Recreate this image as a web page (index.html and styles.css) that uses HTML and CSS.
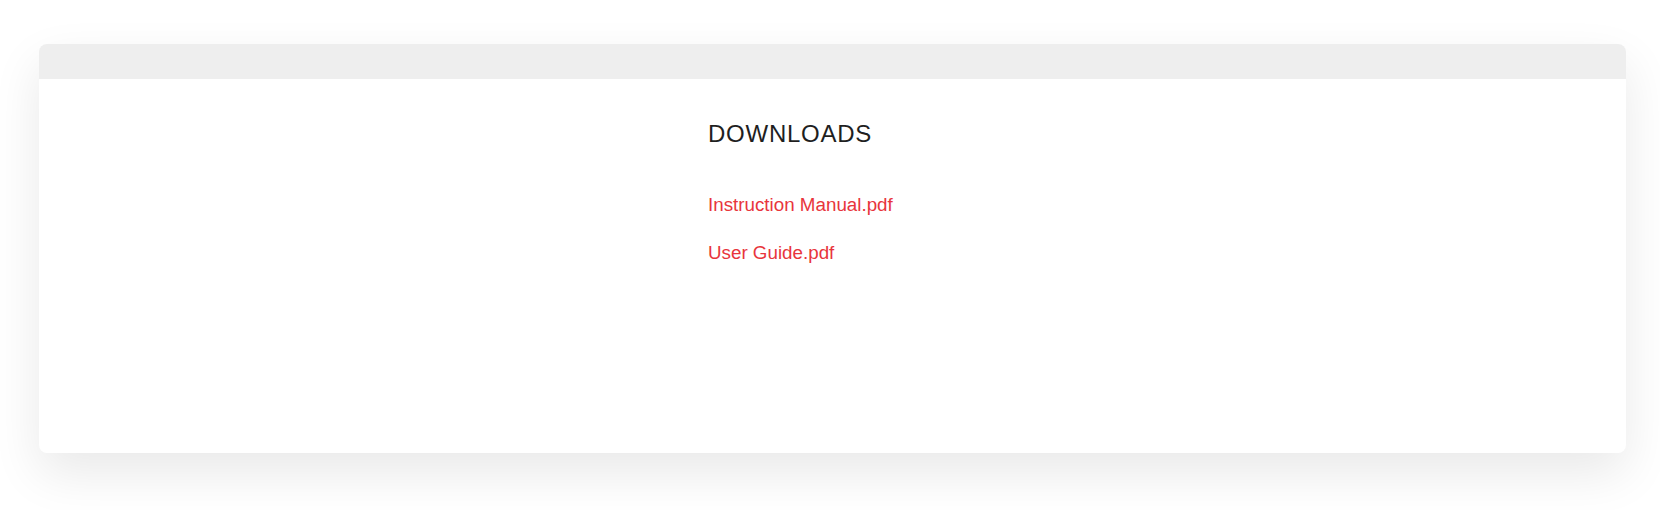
FILE: index.html
```html
<!DOCTYPE html>
<html>
<head>
<meta charset="utf-8">
<link rel="stylesheet" href="styles.css">
</head>
<body>
<div class="page">
  <div class="card">
    <div class="card-header"></div>
    <div class="card-body">
      <h2 class="title">DOWNLOADS</h2>
      <ul class="links">
        <li><a href="#">Instruction Manual.pdf</a></li>
        <li><a href="#">User Guide.pdf</a></li>
      </ul>
    </div>
  </div>
</div>
</body>
</html>
```
FILE: styles.css
```css
html, body {
  margin: 0;
  padding: 0;
  background: #ffffff;
  font-family: "Liberation Sans", Arial, sans-serif;
}
.page {
  box-sizing: border-box;
  min-height: 510px;
  padding: 44px 34px 57px 39px;
}
.card {
  height: 409px;
  background: #ffffff;
  border-radius: 8px;
  overflow: hidden;
  box-shadow: 0 20px 50px rgba(0, 0, 0, 0.09);
  display: flex;
  flex-direction: column;
}
.card-header {
  height: 35px;
  background: #eeeeee;
}
.card-body {
  padding: 41px 0 0 669px;
}
.title {
  margin: 0;
  font-size: 24px;
  font-weight: 400;
  letter-spacing: 0.75px;
  color: #1f1f1f;
  line-height: 27.6px;
}
.links {
  list-style: none;
  margin: 46px 0 0 0;
  padding: 0;
  display: flex;
  flex-direction: column;
  gap: 25.5px;
}
.links li {
  line-height: 22px;
}
.links a {
  font-size: 18.8px;
  color: #e8353c;
  text-decoration: none;
}
```
